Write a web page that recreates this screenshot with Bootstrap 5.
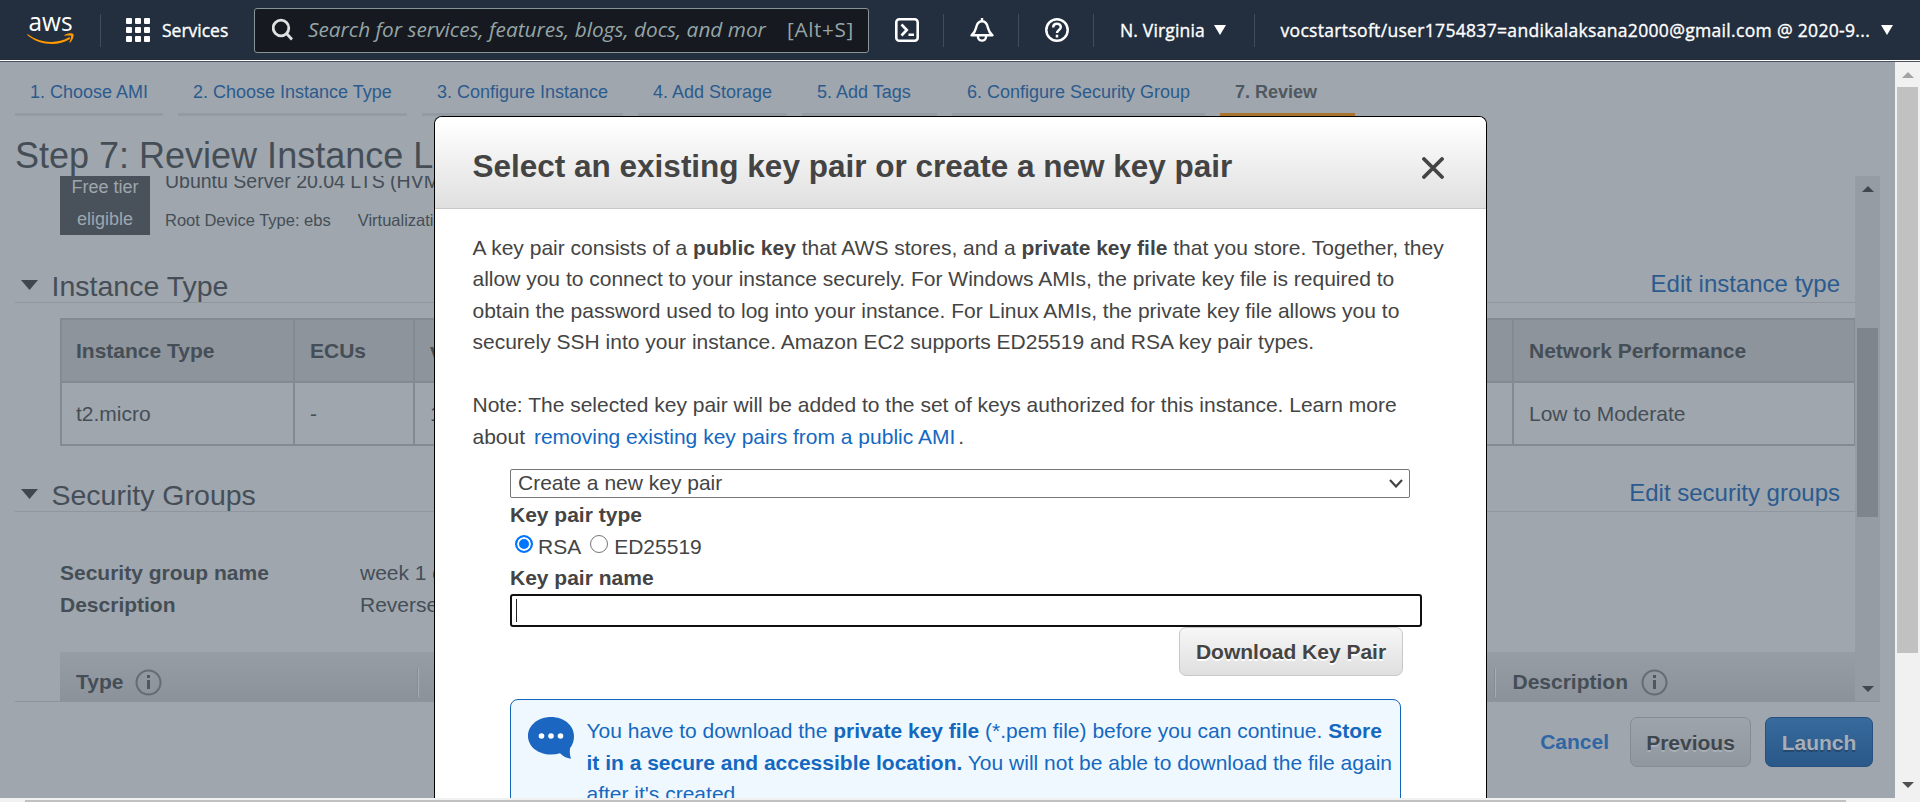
<!DOCTYPE html>
<html lang="en">
<head>
<meta charset="utf-8">
<title>Launch instance wizard</title>
<link rel="stylesheet" href="https://cdn.jsdelivr.net/npm/bootstrap@5.3.0/dist/css/bootstrap.min.css">
<style>
body{width:1920px;height:802px;overflow:hidden;background:#9fa6ad;color:#454e57;font:21px/31.5px "Liberation Sans",Arial,sans-serif}
a{text-decoration:none;color:#2b5b8e}
.topbar{height:60px;background:#232f3e;color:#fff;font:17.5px/24px "Open Sans","Noto Sans",sans-serif}
.topbar svg,.topbar .vbar,.topbar span{flex:none;white-space:nowrap}
.topbar>span{-webkit-text-stroke:.35px #fff;padding-bottom:1px}
.vbar{width:1px;height:33px;background:#414c5a}
.edge{height:2px;background:#fff;border-bottom:1px solid #4d505e}
.searchbox{width:615px;height:45px;flex:none;background:#16191f;border:1px solid #879596;border-radius:3px;color:#95a5a6;font-size:20.8px}
.searchbox span{padding-bottom:2px}
.workarea{height:736px}
.pagecol{width:1895px}
.tabstrip{height:54px;padding-left:15px;gap:15px;font-size:18px}
.tabstrip>a{height:54px;line-height:24px;padding:17.5px 0 0 15px;border-bottom:3px solid #949ba2;white-space:nowrap}
.tabstrip>a.current{border-color:#a9742f;color:#505860}
.step-title{height:60px;margin:0 0 0 15px;padding-top:16px;font-size:36px;line-height:48px;font-weight:400}
.review{margin-left:15px;width:1865px;height:526px;border-bottom:1px solid #8d949b;overflow:hidden}
.review-body{width:1840px;height:525px;overflow:hidden}
.tier{width:90px;height:59px;background:#49525b;color:#9fa6ad;line-height:32px;font-size:18px}
.tier div{height:32px}
.sect{height:35px;border-bottom:1px solid #8f969d;padding:0 15px 0 6px}
.sect h2{font-size:28.5px;line-height:35px;margin:2px 0 0 13.5px;font-weight:400}
.sect a{font-size:24px;line-height:30px;margin-bottom:2px}
.spec{width:1796px;margin-left:45px;table-layout:fixed;border-collapse:collapse}
.spec td,.spec th{border:2px solid #838a91;padding:0 0 0 15px;overflow:hidden;white-space:nowrap}
.spec td:first-child,.spec th:first-child{padding-left:14px}
.spec th{background:#8d949b;height:63px}
.spec td{height:63px}
.sg-row>b{width:300px}
.rules{margin:32px 0 0 45px;height:49px;background:linear-gradient(#969da4,#8b929a)}
.rules i{width:2px;height:29px;background:#858c93;border-right:1px solid #a6adb4}
.vscroll{width:25px;padding:9px 2px;background:#959ca3}
.vscroll .thumb{background:#7e858c}
.footer-row{height:96px;padding:15px 22px 0 0}
.btn-aws{font:bold 21px/47px "Liberation Sans",Arial,sans-serif;padding:0;border:1px solid #848b93;border-radius:7px;color:#3f464d;height:50px;background:linear-gradient(#9da4ab,#90979e);text-shadow:0 2px 0 #a9b0b7}
.btn-go{border-color:#24517f;background:linear-gradient(#386a9d,#295889);color:#a6aeb7;text-shadow:0 2px 0 #244870}
.pagescroll{width:25px;background:#f1f1f1;padding:10px 2px}
.pagescroll .thumb{background:#c1c1c1}
.hscroll{height:4px;background:#f1f1f1;padding:2px 0 0 25px}
.hscroll div{width:1821px;height:2px;background:#c1c1c1}
.dialog{position:absolute;left:434px;top:116px;width:1053px;height:682px;background:#fff;border:1px solid #000;border-bottom:0;border-radius:8px 8px 0 0;overflow:hidden;color:#444}
.dialog-head{height:92px;background:linear-gradient(#fff 5%,#dfdfdf);border-bottom:1px solid #c8c8c8;padding:0 42px 0 37.5px}
.dialog-head h3{font-size:31.5px;font-weight:700;line-height:38px;margin:7px 0 0}
.dialog-body{padding:22.5px 0 0 37.5px}
.dialog a{color:#1468c0}
.dialog p{margin:0 0 31.5px;white-space:nowrap}
.kp-form{padding-left:37.5px}
.kp-select{width:900px;height:29px;border:1px solid #767676;border-radius:2px;padding:0 6px 0 7px;line-height:26px;margin:16.5px 0 1px}
.kp-select span{padding-bottom:1px}
.dot-radio{width:18px;height:18px;border:1.5px solid #767676;border-radius:50%;margin:4px 5px 0 0}
.dot-radio.on{border:2px solid #0075ff;background:#0075ff;box-shadow:inset 0 0 0 2px #fff}
.kp-input{width:912px;height:33px;margin-top:1px;border:2px solid #101010;border-radius:3px;padding:3px 0 0 4px}
.kp-input div{width:1px;height:23px;background:#222}
.btn-light2{width:224px;height:49px;line-height:45px;background:linear-gradient(#f7f7f7,#dfdfdf);border-color:#c8c8c8;color:#444;text-shadow:0 2px 0 #fff;margin-left:669px}
.notice{width:891px;height:130px;margin-top:23px;border:1px solid #1166bb;border-radius:8px 8px 0 0;background:#f0f8ff;color:#1468c0;padding:16px 0 0 17px;white-space:nowrap}
</style>
</head>
<body>
<header class="topbar d-flex align-items-center">
  <svg class="overflow-visible" width="48" height="30" viewBox="0 0 48 30" style="margin-left:27px"><text x="1.500" y="15.500" font-family="Open Sans" font-weight="500" font-size="26" textLength="44" lengthAdjust="spacingAndGlyphs" fill="#fff">aws</text><path d="M.5 19c12 9 29 10.500 41 3.500 1.500-.8 2.500.5 1 1.700C31 32 11 30 .2 20z" fill="#f90"/><path d="M37.500 20c3-2 8-2 8.800-.9.900 1.200-.2 6-3 8.300-.6.500-1.100.2-.8-.5.900-2 2.100-5 1.500-5.900-.7-.9-4-.5-6-.3-.7 0-.9-.3-.5-.7z" fill="#f90"/></svg>
  <div class="vbar" style="margin-left:25px"></div>
  <svg width="24" height="24" style="margin-left:25px" fill="#fff"><g id="r"><rect width="6" height="6" rx="1"/><rect x="9" width="6" height="6" rx="1"/><rect x="18" width="6" height="6" rx="1"/></g><use href="#r" y="9"/><use href="#r" y="18"/></svg>
  <span style="margin-left:12px;width:92px">Services</span>
  <div class="searchbox d-flex align-items-center">
    <svg width="24" height="26" style="margin-left:17px" fill="none" stroke="#dfe2e2" stroke-width="2.800"><circle cx="9" cy="11" r="7.800"/><path d="M14.500 16.500l5.500 6"/></svg>
    <span class="fst-italic" style="margin-left:12px;width:462px">Search for services, features, blogs, docs, and mor</span>
    <span style="margin-left:17px;letter-spacing:.6px">[Alt+S]</span>
  </div>
  <svg width="24" height="24" style="margin-left:26px" fill="none" stroke="#fff" stroke-width="2.600"><rect x="1.300" y="1.300" width="21.400" height="21.400" rx="3"/><path d="M6.500 6.500l5.300 5.500-5.300 5.500M13.500 16.800h5.500"/></svg>
  <div class="vbar" style="margin-left:24px"></div>
  <svg width="24" height="24" style="margin-left:26px" fill="none" stroke="#fff" stroke-width="2.400" stroke-linejoin="round"><path d="M12 0v3.500M1.500 17.300c2.700-2.300 3.800-3.800 4.500-7.300.8-4.200 2.800-6.700 6-6.700s5.200 2.500 6 6.700c.7 3.500 1.800 5 4.500 7.300zM8 18v1a4 3.600 0 0 0 8 0V18"/></svg>
  <div class="vbar" style="margin-left:24px"></div>
  <svg width="24" height="24" style="margin-left:26px" fill="none" stroke="#fff" stroke-width="2.500"><circle cx="12" cy="12" r="10.700"/><path d="M8.200 9.500c0-5 7.600-4.800 7.600-.4 0 3-3.800 2.700-3.800 6M12 16.800v2.600"/></svg>
  <div class="vbar" style="margin-left:24px"></div>
  <span style="margin-left:26px;width:86px;letter-spacing:.17px">N. Virginia</span>
  <svg width="12" height="10" style="margin-left:8px" fill="#fff"><path d="M0 0h12L6 10z"/></svg>
  <div class="vbar" style="margin-left:28px"></div>
  <span style="margin-left:25.500px;width:590px;letter-spacing:.32px">vocstartsoft/user1754837=andikalaksana2000@gmail.com @ 2020-9...</span>
  <svg width="12" height="10" style="margin-left:10px" fill="#fff"><path d="M0 0h12L6 10z"/></svg>
</header>
<div class="edge"></div>
<div class="workarea d-flex">
  <main class="pagecol">
    <nav class="tabstrip d-flex">
      <a href="#" style="width:148px">1. Choose AMI</a><a href="#" style="width:229px">2. Choose Instance Type</a><a href="#" style="width:201px">3. Configure Instance</a><a href="#" style="width:149px">4. Add Storage</a><a href="#" style="width:135px">5. Add Tags</a><a href="#" style="width:253px">6. Configure Security Group</a><a href="#" class="current fw-bold" style="width:135px">7. Review</a>
    </nav>
    <h1 class="step-title">Step 7: Review Instance L</h1>
    <div class="review d-flex">
      <div class="review-body">
        <div class="d-flex" style="margin-left:45px;height:92px">
          <div class="tier text-center"><div style="margin-top:-5px">Free tier</div><div>eligible</div></div>
          <div style="margin-left:15px">
            <div class="text-nowrap" style="font-size:19.500px;margin-top:-10px;height:32px">Ubuntu Server 20.04 LTS (HVM</div>
            <div class="d-flex" style="font-size:16.500px;margin-top:7px;gap:27px"><span>Root Device Type: ebs</span><span>Virtualizati</span></div>
          </div>
        </div>
        <div class="sect d-flex align-items-center">
          <svg width="17" height="10" fill="#3f4850"><path d="M0 0h17L8.500 10z"/></svg><h2>Instance Type</h2><a href="#" class="ms-auto">Edit instance type</a>
        </div>
        <table class="spec" style="margin-top:15px">
          <colgroup><col style="width:233px"><col style="width:120px"><col style="width:1099px"><col></colgroup>
          <tr><th>Instance Type</th><th>ECUs</th><th>v</th><th>Network Performance</th></tr>
          <tr><td>t2.micro</td><td>-</td><td>1</td><td>Low to Moderate</td></tr>
        </table>
        <div class="sect d-flex align-items-center" style="margin-top:31px">
          <svg width="17" height="10" fill="#3f4850"><path d="M0 0h17L8.500 10z"/></svg><h2>Security Groups</h2><a href="#" class="ms-auto">Edit security groups</a>
        </div>
        <div style="margin:45px 0 0 45px">
          <div class="sg-row d-flex"><b>Security group name</b><span>week 1 g</span></div>
          <div class="sg-row d-flex"><b>Description</b><span>Reverse</span></div>
        </div>
        <div class="rules d-flex align-items-center fw-bold">
          <span style="margin:11px 12px 0 16px">Type</span>
          <svg width="27" height="27" style="margin-top:12px" fill="none" stroke="#646c74"><circle cx="13.500" cy="13.500" r="12" stroke-width="2"/><path d="M13.500 11v9M13.500 6v3" stroke="#4f5860" stroke-width="3"/></svg>
          <i style="margin:12px 1075px 0 255px"></i>
          <i style="margin-top:12px"></i>
          <span style="margin:11px 13px 0 16px">Description</span>
          <svg width="27" height="27" style="margin-top:12px" fill="none" stroke="#646c74"><circle cx="13.500" cy="13.500" r="12" stroke-width="2"/><path d="M13.500 11v9M13.500 6v3" stroke="#4f5860" stroke-width="3"/></svg>
        </div>
      </div>
      <div class="vscroll d-flex flex-column align-items-center">
        <svg width="12" height="6" style="margin-top:1px" fill="#3f4850"><path d="M0 6h12L6 0z"/></svg>
        <div class="thumb w-100" style="height:189px;margin-top:136px"></div>
        <svg class="mt-auto" width="12" height="6" fill="#3f4850"><path d="M0 0h12L6 6z"/></svg>
      </div>
    </div>
    <div class="footer-row d-flex justify-content-end">
      <a href="#" class="fw-bold" style="margin:9px 21px 0 0;color:#2f66a3">Cancel</a>
      <button class="btn btn-aws" style="width:121px;margin-right:14px">Previous</button>
      <button class="btn btn-aws btn-go" style="width:108px">Launch</button>
    </div>
  </main>
  <div class="pagescroll d-flex flex-column align-items-center">
    <svg width="12" height="6" fill="#a3a3a3"><path d="M0 6h12L6 0z"/></svg>
    <div class="thumb w-100" style="height:566px;margin-top:9px"></div>
    <svg class="mt-auto" width="12" height="6" fill="#505050"><path d="M0 0h12L6 6z"/></svg>
  </div>
</div>
<div class="hscroll"><div></div></div>

<section class="dialog">
  <div class="dialog-head d-flex align-items-center justify-content-between">
    <h3>Select an existing key pair or create a new key pair</h3>
    <svg width="22" height="22" style="margin-top:11px" stroke="#444" stroke-width="3.800" stroke-linecap="round"><path d="M2 2l18 18M20 2L2 20"/></svg>
  </div>
  <div class="dialog-body">
    <p>A key pair consists of a <b>public key</b> that AWS stores, and a <b>private key file</b> that you store. Together, they<br>allow you to connect to your instance securely. For Windows AMIs, the private key file is required to<br>obtain the password used to log into your instance. For Linux AMIs, the private key file allows you to<br>securely SSH into your instance. Amazon EC2 supports ED25519 and RSA key pair types.</p>
    <p class="mb-0">Note: The selected key pair will be added to the set of keys authorized for this instance. Learn more<br>about <a href="#" style="margin:0 3px">removing existing key pairs from a public AMI</a>.</p>
    <div class="kp-form">
      <div class="kp-select d-flex justify-content-between align-items-center"><span>Create a new key pair</span><svg width="14" height="9" fill="none" stroke="#444" stroke-width="2.200"><path d="M1 1l6 6.500L13 1"/></svg></div>
      <div class="fw-bold">Key pair type</div>
      <div class="d-flex" style="padding:1px 0 0 5px;height:31.500px"><div class="dot-radio on"></div><span>RSA</span><div class="dot-radio" style="margin:4px 6px 0 9px"></div><span>ED25519</span></div>
      <div class="fw-bold">Key pair name</div>
      <div class="kp-input"><div></div></div>
      <button class="btn btn-aws btn-light2 d-block">Download Key Pair</button>
      <div class="notice d-flex">
        <svg width="47" height="42" fill="#1a66c0" style="flex:none;margin-top:1px"><path d="M23 0C10 0 0 8.500 0 19s10 18.500 23 18.500c3 0 6-.5 9-1.300 3 3 6.500 5 11 5.500-1-3-1.500-6-1-10.500 2.800-3.500 4-7.500 4-12.200C46 8.500 36 0 23 0z"/><g fill="#fff"><circle cx="13.500" cy="19" r="2.800"/><circle cx="23" cy="19" r="2.800"/><circle cx="32.500" cy="19" r="2.800"/></g></svg>
        <div style="margin:-1px 0 0 11.500px">You have to download the <b>private key file</b> (*.pem file) before you can continue. <b>Store</b><br><b>it in a secure and accessible location.</b> You will not be able to download the file again<br>after it's created.</div>
      </div>
    </div>
  </div>
</section>
<script src="https://cdn.jsdelivr.net/npm/bootstrap@5.3.0/dist/js/bootstrap.bundle.min.js"></script>
</body>
</html>
